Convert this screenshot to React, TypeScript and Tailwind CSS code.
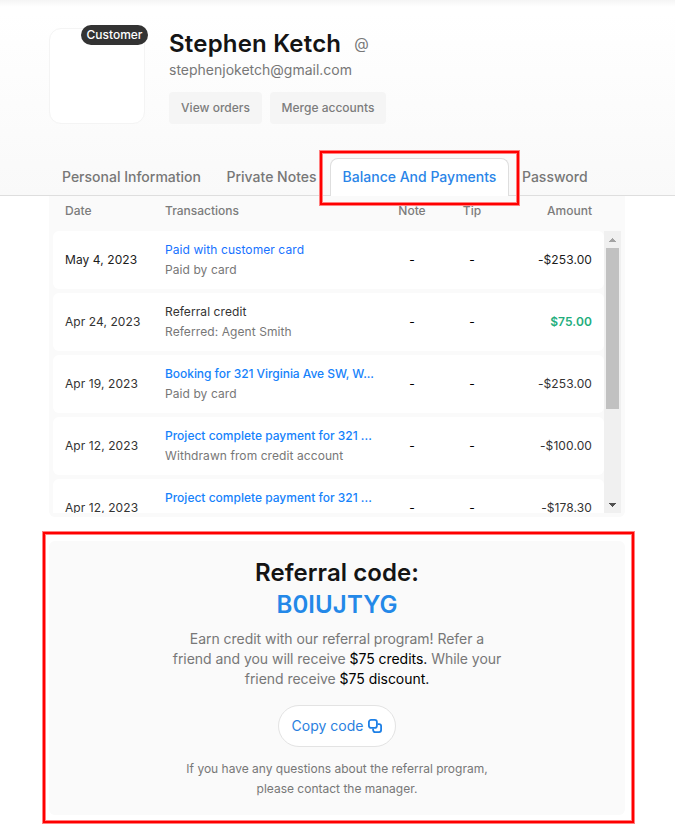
import React from "react";

type Entry = {
  date: string;
  title: string;
  titleClass: string;
  note: string;
  amount: string;
  amountClass: string;
  dateClass: string;
};

const entries: Entry[] = [
  { date: "May 4, 2023", title: "Paid with customer card", titleClass: "tracking-[0.08px] text-[#1672ff]", note: "Paid by card", amount: "-$253.00", amountClass: "text-[#1c1c1c]", dateClass: "text-[#1c1c1c]" },
  { date: "Apr 24, 2023", title: "Referral credit", titleClass: "tracking-[0.08px] text-[#333333]", note: "Referred: Agent Smith", amount: "$75.00", amountClass: "font-semibold -tracking-[0.1px] text-[#22ad7c]", dateClass: "text-[#333333]" },
  { date: "Apr 19, 2023", title: "Booking for 321 Virginia Ave SW, W...", titleClass: "font-medium -tracking-[0.05px] text-[#1682fb]", note: "Paid by card", amount: "-$253.00", amountClass: "text-[#333333]", dateClass: "text-[#333333]" },
  { date: "Apr 12, 2023", title: "Project complete payment for 321 ...", titleClass: "font-medium text-[#1682fb]", note: "Withdrawn from credit account", amount: "-$100.00", amountClass: "text-[#333333]", dateClass: "text-[#333333]" },
  { date: "Apr 12, 2023", title: "Project complete payment for 321 ...", titleClass: "font-medium text-[#1682fb]", note: "", amount: "-$178.30", amountClass: "text-[#333333]", dateClass: "text-[#333333]" },
];

function Highlight({ className }: { className: string }) {
  return (
    <div className={`pointer-events-none absolute border border-[#ff8080] ${className}`}>
      <div className="h-full w-full border-2 border-[#ff0000]">
        <div className="h-full w-full border border-[#ff8080]" />
      </div>
    </div>
  );
}

function Header() {
  return (
    <header className="flex h-[196px] flex-col justify-between border-b border-[#dedede] bg-[linear-gradient(to_bottom,#f5f5f5_0,#ffffff_7px,#ffffff_12px,#f9f9f9_195px)]">
      <div className="flex pt-7 pl-[49px]">
        <div className="relative h-24 w-24 rounded-xl border border-[#f4f4f4] bg-white">
          <span className="absolute -top-1 -right-1 flex h-5 w-[67px] items-center justify-center rounded-full bg-[#333333] text-[12px] font-medium text-white">
            Customer
          </span>
        </div>
        <div className="ml-6">
          <div className="flex h-8 items-center">
            <h1 className="text-[24px] leading-8 font-semibold tracking-[0.2px] whitespace-nowrap text-[#141414]">Stephen Ketch</h1>
            <span className="ml-[13px] text-[15px] leading-5 text-[#777777]">@</span>
          </div>
          <p className="text-[14px] leading-5 text-[#777777]">stephenjoketch@gmail.com</p>
          <div className="mt-3 flex gap-2 text-[12px] font-medium text-[#7c7c7c]">
            <button className="h-8 w-[93px] rounded bg-[#f5f5f5]">View orders</button>
            <button className="h-8 w-[116px] rounded bg-[#f5f5f5]">Merge accounts</button>
          </div>
        </div>
      </div>
      <nav className="-mb-px flex h-[38px] pl-[62px] text-[14px] leading-[37px] font-medium text-[#777777]">
        <span className="w-[164.5px]">Personal Information</span>
        <span className="w-[103.5px]">Private Notes</span>
        <span className="h-full w-[179px] rounded-t-lg border border-b-0 border-[#dedede] bg-white text-center leading-[35px] text-[#2a85e8]">
          Balance And Payments
        </span>
        <span className="ml-[13px]">Password</span>
      </nav>
    </header>
  );
}

function Scrollbar() {
  return (
    <div className="flex w-[17px] flex-col items-center bg-[#f0f0f0]">
      <div className="flex h-[17px] items-center justify-center">
        <svg width="7" height="4" viewBox="0 0 7 4" shapeRendering="crispEdges"><path d="M3 0h1v1h1v1h1v1h1v1H0V3h1V2h1V1h1z" fill="#a3a3a3" /></svg>
      </div>
      <div className="h-[161px] w-[13px] bg-[#c1c1c1]" />
      <div className="mt-auto flex h-[17px] items-center justify-center">
        <svg width="7" height="4" viewBox="0 0 7 4" shapeRendering="crispEdges"><path d="M0 0h7v1H6v1H5v1H4v1H3V3H2V2H1V1H0z" fill="#505050" /></svg>
      </div>
    </div>
  );
}

function Transactions() {
  return (
    <section className="ml-[49px] h-[321px] w-[576px] rounded-b-md bg-[#fafafa] p-1 pt-0 text-[12px]">
      <div className="flex h-[35px] pt-[5px] pr-[29px] pl-3 leading-5 font-medium text-[#7c7c7c]">
        <span className="w-[100px]">Date</span>
        <span className="w-[217px]">Transactions</span>
        <span className="w-[60px] text-center">Note</span>
        <span className="w-[60px] text-center">Tip</span>
        <span className="flex-1 text-right">Amount</span>
      </div>
      <div className="flex h-[282px] overflow-hidden">
        <div className="flex w-[551px] flex-col gap-1">
          {entries.map((e, i) => (
            <div key={i} className="flex h-[58px] shrink-0 items-center rounded-md bg-white px-3 leading-5 text-[#333333]">
              <span className={`w-[100px] tracking-[0.08px] ${e.dateClass}`}>{e.date}</span>
              <div className="w-[217px] whitespace-nowrap">
                <div className={e.titleClass}>{e.title}</div>
                <div className="h-5 tracking-[0.08px] text-[#777777]">{e.note}</div>
              </div>
              <span className="w-[60px] text-center text-black">-</span>
              <span className="w-[60px] text-center text-black">-</span>
              <span className={`flex-1 text-right tracking-[0.1px] ${e.amountClass}`}>{e.amount}</span>
            </div>
          ))}
        </div>
        <Scrollbar />
      </div>
    </section>
  );
}

function CopyIcon() {
  return (
    <svg width="14" height="14" viewBox="0 0 14 14" fill="none" stroke="#1e80e6" strokeWidth="1.8">
      <rect x="0.9" y="0.9" width="8" height="8" rx="2.2" />
      <path d="M9.5 5.1h1.6a2 2 0 0 1 2 2v4a2 2 0 0 1-2 2h-4a2 2 0 0 1-2-2V9.4" />
    </svg>
  );
}

function Referral() {
  return (
    <section className="mt-6 ml-[49px] flex h-[274px] w-[576px] flex-col items-center rounded-md bg-[#fafafa] pt-4 text-center">
      <h2 className="text-[24px] leading-8 font-semibold tracking-[0.07px] text-[#141414]">Referral code:</h2>
      <div className="text-[24px] leading-8 font-semibold tracking-[0.1px] text-[#2388e8]">B0IUJTYG</div>
      <p className="mt-2 text-[14px] leading-5 -tracking-[0.04px] whitespace-nowrap text-[#777777]">
        Earn credit with our referral program! Refer a
        <br />
        friend and you will receive <span className="text-black">$75 credits.</span> While your
        <br />
        friend receive <span className="text-black">$75 discount.</span>
      </p>
      <button className="mt-4 flex h-[42px] w-[118px] items-center justify-center gap-[5px] rounded-full border border-[#e3e3e3] bg-white text-[14px] whitespace-nowrap text-[#2a7fe0]">
        <span className="leading-5">Copy code</span>
        <CopyIcon />
      </button>
      <p className="mt-3 text-[12px] leading-5 whitespace-nowrap text-[#777777]">
        If you have any questions about the referral program,
        <br />
        please contact the manager.
      </p>
    </section>
  );
}

export default function App() {
  return (
    <main className="relative h-[834px] w-[675px] overflow-hidden bg-white font-['Inter',sans-serif]">
      <Header />
      <Transactions />
      <Referral />
      <Highlight className="top-[150px] left-[319px] h-[56px] w-[201px]" />
      <Highlight className="top-[531px] left-[42px] h-[293px] w-[593px]" />
    </main>
  );
}
